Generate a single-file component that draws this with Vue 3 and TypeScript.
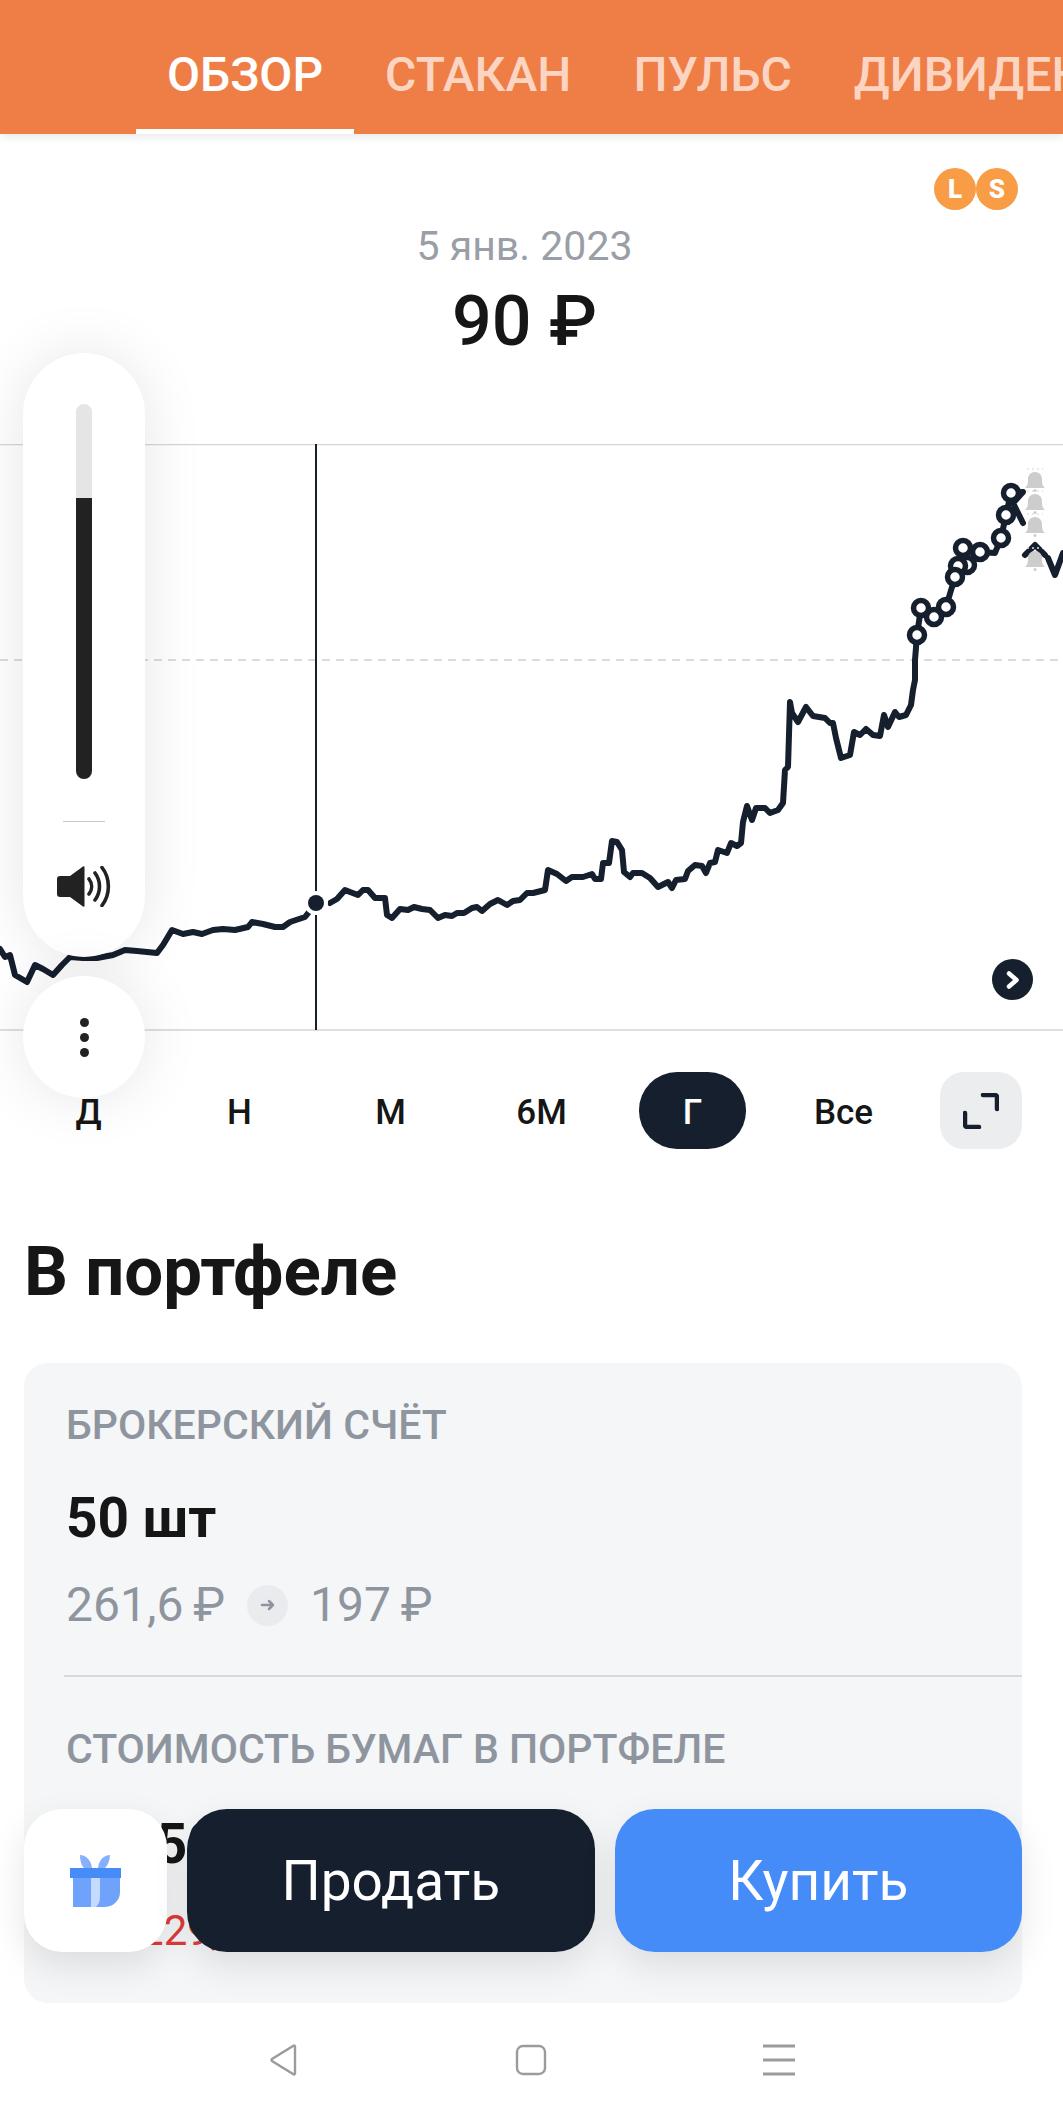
<template>
  <div class="screen">
    <header class="tabs">
      <div
        v-for="(tab, i) in tabs"
        :key="tab"
        class="tab"
        :class="{ active: i === 0 }"
      >{{ tab }}</div>
    </header>

    <section class="quote">
      <div class="badges">
        <span class="badge">L</span>
        <span class="badge">S</span>
      </div>
      <div class="date">5 янв. 2023</div>
      <div class="price">90 ₽</div>
    </section>

    <div class="chart">
      <svg class="plot" viewBox="0 0 1063 588" width="1063" height="588">
        <line x1="0" y1="0.5" x2="1063" y2="0.5" stroke="#d4d5d7" stroke-width="1.5" />
        <line x1="0" y1="216" x2="1063" y2="216" stroke="#cfd0d2" stroke-width="1.5" stroke-dasharray="8 6" />
        <line x1="0" y1="586" x2="1063" y2="586" stroke="#d4d5d7" stroke-width="1.5" />
        <line x1="316" y1="0" x2="316" y2="586" stroke="#161f2e" stroke-width="2" />
        <g transform="translate(0 -444)">
          <polyline class="price-line" :points="leftLine" />
          <polyline class="price-line" :points="mainLine" />
          <polyline class="price-line" points="1025,555 1035,545 1045,555" />
          <polyline class="price-line" :points="tailLine" />
          <circle cx="316" cy="903" r="12" fill="#fff" />
          <circle cx="316" cy="903" r="8" fill="#161f2e" />
          <circle
            v-for="(m, i) in markers"
            :key="i"
            :cx="m[0]"
            :cy="m[1]"
            r="7.5"
            fill="#fff"
            stroke="#161f2e"
            stroke-width="5.5"
          />
          <g v-for="y in bells" :key="y" :transform="`translate(1035 ${y})`">
            <path d="M-10 8c3-3 3-5 3-9 0-4 3-7 7-7s7 3 7 7c0 4 0 6 3 9z" fill="#cdcdcd" />
            <circle cx="0" cy="10.5" r="1.5" fill="#cdcdcd" />
            <path d="M-8 -11H8" stroke="#e4e4e4" stroke-width="1.5" stroke-dasharray="2 3" />
          </g>
        </g>
      </svg>
      <button class="next" type="button">
        <svg viewBox="0 0 20 20" width="20" height="20">
          <path d="M6 3.5 13.500 10 6 16.5" fill="none" stroke="#fff" stroke-width="4.500" stroke-linecap="round" stroke-linejoin="round" />
        </svg>
      </button>
    </div>

    <nav class="periods">
      <div
        v-for="p in periods"
        :key="p"
        class="period"
      >
        <span :class="{ selected: p === 'Г' }">{{ p }}</span>
      </div>
      <button class="expand" type="button">
        <svg viewBox="0 0 36 36" width="36" height="36">
          <path d="M20 2h12a2 2 0 0 1 2 2v12M16 34H4a2 2 0 0 1-2-2V20" fill="none" stroke="#161f2e" stroke-width="4.500" stroke-linecap="round" />
        </svg>
      </button>
    </nav>

    <h2 class="title">В портфеле</h2>

    <section class="card">
      <div class="label">БРОКЕРСКИЙ СЧЁТ</div>
      <div class="amount">50 шт</div>
      <div class="prices">
        <span>261,6&#8201;₽</span>
        <span class="arrow">
          <svg viewBox="0 0 16 16" width="16" height="16">
            <path d="M2 8h11M9 4l4 4-4 4" fill="none" stroke="#8f959e" stroke-width="2.500" stroke-linecap="round" stroke-linejoin="round" />
          </svg>
        </span>
        <span>197&#8201;₽</span>
      </div>
      <div class="rule"></div>
      <div class="label">СТОИМОСТЬ БУМАГ В ПОРТФЕЛЕ</div>
      <div class="amount worth">9 850 ₽</div>
      <div class="loss">−3 229,88 ₽ 24,7%</div>
    </section>

    <!-- плавающие элементы поверх графика -->
    <div class="volume">
      <div class="track"><div class="fill"></div></div>
      <div class="volume-rule"></div>
      <svg class="speaker" viewBox="0 0 56 41" width="56" height="41">
        <path d="M0 13a3 3 0 0 1 3-3h10L26 0.5a1 1 0 0 1 1.500 0.800v38.400a1 1 0 0 1-1.500 0.800L13 31H3a3 3 0 0 1-3-3z" fill="#222" />
        <path d="M32 13c3.500 4.500 3.500 10.500 0 15M38 7c6 8 6 19 0 27M45 1.500c8.500 11 8.500 27 0 38" fill="none" stroke="#222" stroke-width="3.600" stroke-linecap="round" />
      </svg>
    </div>
    <button class="more" type="button">
      <i></i><i></i><i></i>
    </button>

    <div class="actions">
      <button class="gift" type="button">
        <svg viewBox="0 0 51 52" width="51" height="52">
          <path d="M10 0c5 0 11 4 12 13h-8c-3-3-4-8-4-13zM40 0c0 5-2 10-5 13h-7c1-8 6-13 12-13z" fill="#86b0fb" />
          <path d="M3 23h47v14a15 15 0 0 1-15 15H3z" fill="#6ea2fb" />
          <rect x="0" y="13" width="51" height="10" fill="#458cf8" />
          <path d="M21 23h9v20c0 4-2 7-4 9h-5z" fill="#c5daff" />
        </svg>
      </button>
      <button class="trade sell" type="button">Продать</button>
      <button class="trade buy" type="button">Купить</button>
    </div>

    <footer class="system-nav">
      <svg viewBox="0 0 32 32" width="32" height="32">
        <path d="M28 2.500v27a1 1 0 0 1-1.600.700L5 17a1.300 1.300 0 0 1 0-2L26.400 1.800A1 1 0 0 1 28 2.500z" fill="none" stroke="#9b9b9b" stroke-width="2.400" />
      </svg>
      <svg viewBox="0 0 32 32" width="32" height="32">
        <rect x="2" y="2" width="28" height="28" rx="6" fill="none" stroke="#9b9b9b" stroke-width="2.400" />
      </svg>
      <svg viewBox="0 0 32 32" width="32" height="32">
        <path d="M0 2h32M0 16h32M0 30h32" fill="none" stroke="#9b9b9b" stroke-width="3" />
      </svg>
    </footer>
  </div>
</template>

<script setup lang="ts">
const tabs = ['ОБЗОР', 'СТАКАН', 'ПУЛЬС', 'ДИВИДЕНДЫ']
const periods = ['Д', 'Н', 'М', '6М', 'Г', 'Все']

const markers: number[][] = [
  [1011, 493], [1006, 515], [1001, 538], [980, 552], [967, 565], [958, 566],
  [963, 548], [955, 577], [946, 607], [934, 617], [921, 608], [917, 635],
]
const bells = [480, 502, 525, 559]

// участки ценовой линии: слева от текущей точки и основной ход
const leftLine = '0,949 5,957 10,955 15,975 27,982 35,965 43,969 53,975 62,965 70,957 83,958 97,958 113,955 125,950 137,951 157,953 163,945 172,930 183,934 193,932 202,934 213,930 223,929 235,930 248,927 252,922 263,924 275,927 283,927 290,922 305,917 309,912'
const mainPoints: number[][] = [
  [330, 903], [337, 899], [345, 890], [350, 892], [358, 895], [363, 890], [368, 890], [375, 898], [385, 898],
  [387, 915], [392, 918], [400, 909], [408, 910], [414, 907], [422, 909], [430, 910], [438, 918], [445, 915],
  [452, 916], [457, 913], [464, 913], [472, 908], [477, 907], [482, 911], [490, 904], [498, 900], [507, 905],
  [513, 901], [520, 900], [527, 893], [533, 893], [545, 890], [548, 870], [557, 874], [566, 881], [572, 877],
  [583, 877], [592, 874], [595, 879], [601, 879], [603, 863], [609, 863], [612, 841], [617, 842], [622, 850],
  [624, 872], [630, 877], [633, 873], [642, 873], [650, 878], [658, 887], [668, 882], [672, 888], [676, 880],
  [685, 879], [688, 871], [695, 865], [702, 866], [706, 873], [710, 863], [715, 862], [718, 850], [727, 853],
  [731, 843], [737, 846], [741, 843], [743, 822], [747, 806], [752, 820], [756, 808], [765, 808], [770, 813],
  [778, 810], [783, 803], [785, 770], [788, 767], [790, 702], [792, 713], [798, 722], [806, 707], [813, 716],
  [825, 718], [830, 723], [833, 723], [836, 738], [841, 758], [850, 755], [854, 732], [860, 735], [866, 729],
  [873, 735], [880, 736], [884, 715], [888, 727], [895, 712], [899, 717], [906, 715], [911, 705], [913, 690],
  [915, 680], [915, 660], [917, 635], [921, 608], [934, 617], [946, 607], [955, 577], [958, 566], [967, 565],
  [963, 548], [980, 552], [995, 553], [1001, 538], [1006, 515], [1011, 493], [1023, 492], [1013, 503], [1023, 523],
]
const mainLine = mainPoints.map(p => p.join(',')).join(' ')
const tailLine = '1048,558 1055,575 1063,553'
</script>

<style scoped>
.screen {
  position: relative;
  width: 1063px;
  height: 2115px;
  overflow: hidden;
  background: #fff;
  font-family: Roboto, "Noto Sans", sans-serif;
  color: #161616;
}
button { border: 0; padding: 0; font: inherit; }

.tabs {
  display: flex;
  height: 134px;
  padding-left: 136px;
  background: #ef7e46;
  box-shadow: 0 2px 10px rgba(0, 0, 0, 0.1);
  white-space: nowrap;
  position: relative;
}
.tab {
  padding: 47px 31px 0;
  font-size: 48px;
  line-height: 56px;
  font-weight: 500;
  color: #fbd5c2;
}
.tab.active { color: #fff; box-shadow: inset 0 -5px 0 #fff; }

.quote { height: 310px; padding-right: 14px; text-align: center; position: relative; }
.badges { position: absolute; top: 34px; right: 45px; display: flex; }
.badge {
  width: 42px;
  height: 42px;
  border-radius: 50%;
  background: #f89c46;
  color: #fff;
  font-size: 26px;
  font-weight: 900;
  line-height: 42px;
}
.date { padding-top: 88px; font-size: 41px; line-height: 48px; color: #9a9fa7; }
.price { margin-top: 10px; font-size: 70px; line-height: 82px; font-weight: 500; }

.chart { position: relative; height: 588px; }
.plot { display: block; }
.price-line {
  fill: none;
  stroke: #161f2e;
  stroke-width: 6;
  stroke-linejoin: round;
  stroke-linecap: round;
}
.next {
  position: absolute;
  left: 992px;
  top: 515px;
  width: 41px;
  height: 41px;
  border-radius: 50%;
  background: #161f2e;
  display: flex;
  align-items: center;
  justify-content: center;
}

.periods {
  display: flex;
  align-items: center;
  height: 77px;
  margin-top: 40px;
  padding-left: 13px;
  position: relative;
}
.period {
  width: 151px;
  display: flex;
  justify-content: center;
  font-size: 35px;
  font-weight: 500;
}
.period span {
  display: flex;
  align-items: center;
  justify-content: center;
  box-sizing: border-box;
  height: 77px;
  min-width: 107px;
  padding-top: 3px;
  border-radius: 38px;
}
.period span.selected { background: #161f2e; color: #fff; }
.expand {
  margin-left: 21px;
  width: 82px;
  height: 77px;
  border-radius: 24px;
  background: #ebedef;
  display: flex;
  align-items: center;
  justify-content: center;
}

.title { margin: 85px 0 0 24px; font-size: 69px; line-height: 76px; font-weight: 700; }

.card {
  margin: 53px 41px 0 24px;
  height: 640px;
  padding: 40px 0 0 42px;
  box-sizing: border-box;
  border-radius: 24px;
  background: #f4f6f8;
}
.label { font-size: 41px; line-height: 44px; font-weight: 500; color: #8f959e; }
.amount { margin-top: 41px; font-size: 55px; line-height: 60px; font-weight: 700; }
.prices {
  display: flex;
  align-items: center;
  gap: 22px;
  margin-top: 30px;
  font-size: 48px;
  line-height: 54px;
  color: #8f959e;
}
.arrow {
  width: 41px;
  height: 41px;
  border-radius: 50%;
  background: #e9ebee;
  display: flex;
  align-items: center;
  justify-content: center;
}
.rule { height: 1.5px; margin: 43px 0 50px -2px; background: #d5d8dc; }
.worth { margin-top: 43px; word-spacing: 13px; }
.loss {
  margin-top: 32px;
  font-size: 42px;
  line-height: 50px;
  word-spacing: 16px;
  color: #e03a3a;
  white-space: nowrap;
}

.volume {
  position: absolute;
  left: 23px;
  top: 353px;
  width: 122px;
  height: 604px;
  border-radius: 61px;
  background: #fff;
  box-shadow: 0 0 60px rgba(0, 0, 0, 0.1);
  display: flex;
  flex-direction: column;
  align-items: center;
}
.track {
  margin-top: 51px;
  width: 16px;
  height: 375px;
  border-radius: 8px;
  overflow: hidden;
  background: #e5e5e5;
  display: flex;
  align-items: flex-end;
}
.fill { width: 100%; height: 281px; background: #222; }
.volume-rule { width: 42px; height: 1px; margin-top: 42px; background: #c9c9c9; }
.speaker { margin-top: 44px; margin-left: 2px; }
.more {
  position: absolute;
  left: 23px;
  top: 976px;
  width: 122px;
  height: 122px;
  border-radius: 50%;
  background: #fff;
  box-shadow: 0 0 60px rgba(0, 0, 0, 0.1);
  display: flex;
  flex-direction: column;
  align-items: center;
  justify-content: center;
  gap: 6px;
}
.more i { width: 9px; height: 9px; border-radius: 50%; background: #222; }

.actions {
  position: absolute;
  left: 24px;
  right: 41px;
  top: 1809px;
  height: 143px;
  display: flex;
  gap: 20px;
}
.gift {
  flex: 0 0 143px;
  border-radius: 38px;
  background: #fff;
  box-shadow: 0 14px 36px rgba(0, 0, 0, 0.1);
  display: flex;
  align-items: center;
  justify-content: center;
}
.trade {
  flex: 1;
  border-radius: 40px;
  font-size: 55px;
  color: #fff;
  box-shadow: 0 14px 36px rgba(0, 0, 0, 0.1);
}
.sell { background: #161f2e; }
.buy { background: #458cf8; }

.system-nav {
  position: absolute;
  left: 267px;
  top: 2044px;
  width: 528px;
  display: flex;
  justify-content: space-between;
}
.system-nav svg { display: block; }
</style>

<style>
html, body { margin: 0; background: #fff; }
</style>
